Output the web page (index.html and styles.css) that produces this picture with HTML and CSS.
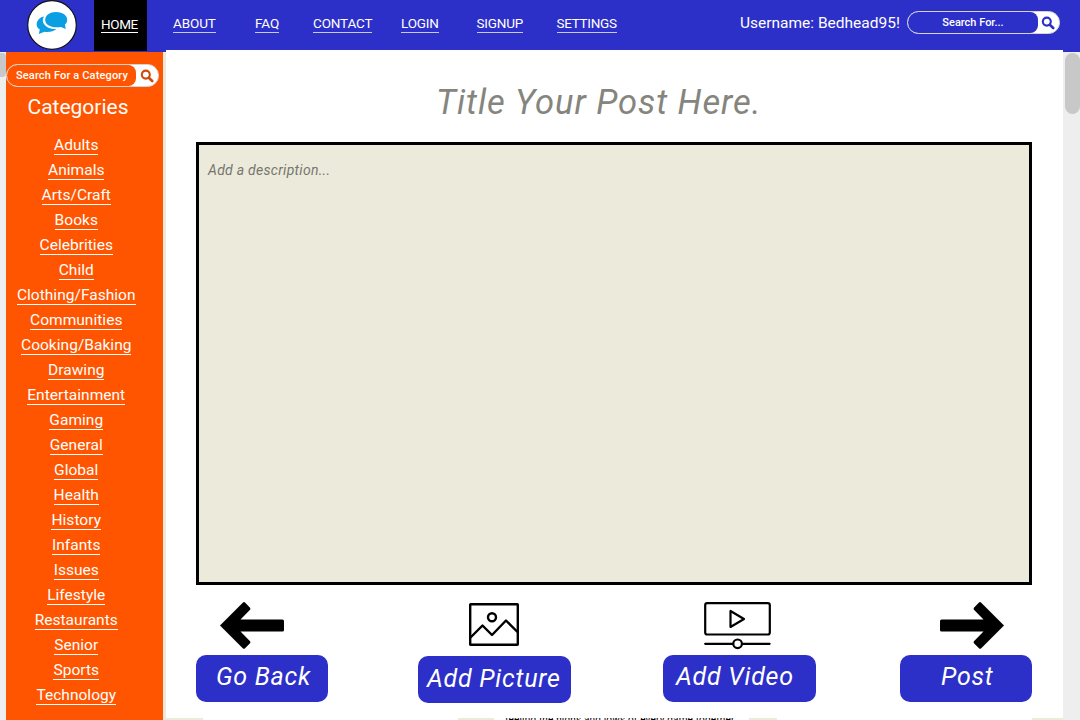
FILE: index.html
```html
<!DOCTYPE html>
<html lang="en">
<head>
<meta charset="utf-8">
<title>Create a post</title>
<link rel="stylesheet" href="styles.css">
</head>
<body>
<header class="topbar">
  <div class="logo">
    <svg width="50" height="50" viewBox="0 0 50 50">
      <circle cx="25" cy="25" r="24.3" fill="#fff" stroke="#111" stroke-width="1.2"/>
      <path d="M17 16.500C13 23 20 29.500 29.500 29C26.500 31.500 22 32.500 17.500 31.800L11.800 34L12.800 29.600C9.400 27.500 9 24 10.500 21C12 18.500 14 17 17 16.500Z" fill="#0a9fe2"/>
      <path d="M29 12C35 12 40.200 15 40.200 19.500C40.200 22 39.300 23.500 37.900 24.600L38.800 29L33.900 26.900C25 28.600 18.200 25 18.200 20C18.200 15 23 12 29 12Z" fill="#0a9fe2" stroke="#fff" stroke-width="2.800" paint-order="stroke"/>
    </svg>
  </div>
  <nav class="nav">
    <a class="nav-link active" href="#"><span>HOME</span></a>
    <a class="nav-link about" href="#"><span>ABOUT</span></a>
    <a class="nav-link faq" href="#"><span>FAQ</span></a>
    <a class="nav-link contact" href="#"><span>CONTACT</span></a>
    <a class="nav-link login" href="#"><span>LOGIN</span></a>
    <a class="nav-link signup" href="#"><span>SIGNUP</span></a>
    <a class="nav-link settings" href="#"><span>SETTINGS</span></a>
  </nav>
  <div class="username">Username: Bedhead95!</div>
  <div class="search search-top">
    <span class="field">Search For...</span>
    <svg class="lens" width="14" height="14" viewBox="0 0 14 14"><circle cx="5.800" cy="5.600" r="4" fill="none" stroke="currentColor" stroke-width="2.100"/><path d="M8.800 8.800L12.200 12" stroke="currentColor" stroke-width="2.600" stroke-linecap="round"/></svg>
  </div>
</header>
<div class="body">
  <div class="gutter"><div class="thumb"></div></div>
  <aside class="sidebar">
    <div class="search search-side">
      <span class="field">Search For a Category</span>
      <svg class="lens" width="14" height="14" viewBox="0 0 14 14"><circle cx="5.800" cy="5.600" r="4" fill="none" stroke="currentColor" stroke-width="2.100"/><path d="M8.800 8.800L12.200 12" stroke="currentColor" stroke-width="2.600" stroke-linecap="round"/></svg>
    </div>
    <h2 class="side-title"><span>Categories</span></h2>
    <ul class="cats">
      <li><a href="#">Adults</a></li>
      <li><a href="#">Animals</a></li>
      <li><a href="#">Arts/Craft</a></li>
      <li><a href="#">Books</a></li>
      <li><a href="#">Celebrities</a></li>
      <li><a href="#">Child</a></li>
      <li><a href="#">Clothing/Fashion</a></li>
      <li><a href="#">Communities</a></li>
      <li><a href="#">Cooking/Baking</a></li>
      <li><a href="#">Drawing</a></li>
      <li><a href="#">Entertainment</a></li>
      <li><a href="#">Gaming</a></li>
      <li><a href="#">General</a></li>
      <li><a href="#">Global</a></li>
      <li><a href="#">Health</a></li>
      <li><a href="#">History</a></li>
      <li><a href="#">Infants</a></li>
      <li><a href="#">Issues</a></li>
      <li><a href="#">Lifestyle</a></li>
      <li><a href="#">Restaurants</a></li>
      <li><a href="#">Senior</a></li>
      <li><a href="#">Sports</a></li>
      <li><a href="#">Technology</a></li>
    </ul>
  </aside>
  <main class="main">
    <section class="composer">
      <h1 class="post-title">Title Your Post Here.</h1>
      <div class="description">Add a description...</div>
      <div class="actions">
        <div class="action back">
          <svg width="64" height="48" viewBox="0 0 64 48"><path d="M0 23.500L23 0.500Q24 -.5 25 .5L30.300 6V7.500L20.500 17.500H62.500Q64 17.500 64 19V28Q64 29.500 62.500 29.500H20.500L30.300 39.500V41L25 46.300Q24 47.300 23 46.500Z"/></svg>
          <button class="btn"><span>Go Back</span></button>
        </div>
        <div class="action picture">
          <svg width="50" height="44" viewBox="0 0 50 44" fill="none" stroke="#000" stroke-width="2.400"><rect x="1.200" y="1.200" width="47.600" height="40.500" rx=".5"/><circle cx="23" cy="14.300" r="4"/><path d="M1.500 34.500L13.500 22.500L23 32L37 17.500L48.500 29" stroke-linejoin="round"/></svg>
          <button class="btn"><span>Add Picture</span></button>
        </div>
        <div class="action video">
          <svg width="67" height="48" viewBox="0 0 67 48" fill="none" stroke="#000" stroke-width="2.200" stroke-linejoin="round" stroke-linecap="round"><rect x="1.200" y="1.200" width="64.600" height="31.300" rx="2"/><path d="M26.500 9V25L40 17ZM1.200 41.800H29M38.200 41.800H65.600"/><circle cx="33.600" cy="41.800" r="4.300"/></svg>
          <button class="btn"><span>Add Video</span></button>
        </div>
        <div class="action post">
          <svg width="64" height="48" viewBox="0 0 64 48"><path transform="matrix(-1 0 0 1 64 0)" d="M0 23.500L23 0.500Q24 -.5 25 .5L30.300 6V7.500L20.500 17.500H62.500Q64 17.500 64 19V28Q64 29.500 62.500 29.500H20.500L30.300 39.500V41L25 46.300Q24 47.300 23 46.500Z"/></svg>
          <button class="btn"><span>Post</span></button>
        </div>
      </div>
    </section>
    <div class="feed">
      <div class="card card-a"></div>
      <div class="card card-b"><p>feeling the highs and lows of every game together</p></div>
      <div class="card card-c"></div>
    </div>
  </main>
  <div class="scrollbar"><div class="thumb"></div></div>
</div>
</body>
</html>
```
FILE: styles.css
```css
* { box-sizing: border-box; }
body {
  margin: 0;
  width: 1080px;
  height: 720px;
  overflow: hidden;
  font-family: Roboto, "Liberation Sans", sans-serif;
  color: #fff;
}
a { color: inherit; text-decoration: none; }
svg { display: block; }

.topbar {
  display: flex;
  align-items: flex-start;
  height: 52px;
  background: #2d2fc9;
}
.logo { width: 94px; padding-left: 27px; }
.nav { display: flex; width: 646px; }
.nav-link {
  display: flex;
  height: 51px;
  padding-top: 15px;
  font-size: 13.500px;
  line-height: 17px;
}
.nav-link span { height: 18px; border-bottom: 1px solid #c9c9f0; white-space: nowrap; }
.nav-link.active { width: 53px; padding: 16px 2px 0 0; justify-content: center; background: #000; letter-spacing: -.4px; }
.nav-link.active span { height: 17px; border-color: #fff; }
.about { width: 82px; margin-left: 26px; }
.faq { width: 58px; }
.contact { width: 88px; letter-spacing: -.3px; }
.about, .faq { letter-spacing: -.1px; }
.contact { letter-spacing: -.15px; }
.login { width: 75.500px; letter-spacing: -.2px; }
.signup { width: 80px; letter-spacing: -.2px; }
.settings { letter-spacing: -.3px; }
.username { width: 167px; padding-top: 13px; font-size: 15.500px; line-height: 20px; white-space: nowrap; letter-spacing: 0; }

.search {
  display: flex;
  height: 23px;
  border: 1px solid #d4d4d4;
  border-radius: 12px;
  background: #fff;
}
.search .field {
  height: 21px;
  border-radius: 11px 8px 8px 11px;
  font-size: 11px;
  line-height: 22px;
  text-align: center;
  white-space: nowrap;
  font-weight: 500;
}
.lens { margin: 4px 0 0 4px; }
.search-top { width: 153px; margin-top: 11px; color: #2d2fc9; }
.search-top .field { width: 130px; background: #2d2fc9; color: #fff; }
.search-top .lens { margin-left: 3px; }
.search-side { width: 153px; color: #cc4a0c; }
.search-side .field { width: 129px; padding-left: 1px; letter-spacing: .15px; background: #ff5500; color: #fff; }

.body { display: flex; height: 668px; }
.gutter { width: 6px; background: #eee; padding-top: 1px; }
.gutter .thumb { height: 24px; background: #c8c8c8; border-radius: 0 4px 4px 0; }
.sidebar { width: 157px; padding-top: 12px; background: #ff5500; }
.side-title { margin: 6px 0 0; padding-right: 13px; font-size: 21px; font-weight: 400; line-height: 28px; text-align: center; }
.cats { margin: 13px 0 0; padding: 0 16.500px 0 0; list-style: none; }
.cats li { display: flex; justify-content: center; height: 25px; font-size: 15.500px; line-height: 22px; white-space: nowrap; letter-spacing: .03px; }
.cats a { height: 21px; border-bottom: 1px solid #fff; }

.main { width: 900px; padding-left: 3px; background: #eceadb; }
.composer { position: relative; height: 668px; margin-top: -2px; background: #fff; overflow: hidden; }
.post-title { margin: 30px 0 0 270px; color: #85857e; font-size: 34.500px; font-style: italic; font-weight: 400; line-height: 44px; letter-spacing: .95px; white-space: nowrap; }
.description {
  width: 836px;
  height: 443px;
  margin: 18px 0 0 30px;
  padding: 15px 9px;
  border: 3px solid #000;
  background: #eceadb;
  color: #76766f;
  font-size: 14px;
  font-style: italic;
  line-height: 20px;
  letter-spacing: .28px;
}
.actions { display: flex; margin-top: 17px; padding-left: 30px; }
.action { display: flex; flex-direction: column; }
.action > svg { height: 48px; }
.btn {
  height: 47px;
  margin-top: 5px;
  padding: 0;
  border: 0;
  border-radius: 10px;
  background: #2d2fc9;
  color: #fff;
  font: italic 400 25px/28px Roboto, "Liberation Sans", sans-serif;
  letter-spacing: .75px;
  text-align: left;
  white-space: nowrap;
}
.btn span { display: block; padding-bottom: 4px; }
.back { width: 132px; margin-right: 90px; }
.back svg { margin-left: 24px; }
.back .btn { padding-left: 20px; }
.picture { width: 153px; margin-right: 92px; }
.picture svg { height: 44px; margin: 1px 0 3px 51px; }
.picture .btn { margin-top: 6px; padding-left: 9px; }
.picture .btn span { padding-bottom: 2px; }
.video { width: 153px; margin-right: 84px; }
.video svg { margin-left: 41px; }
.video .btn { padding-left: 13px; }
.post { width: 132px; }
.post svg { margin-left: 40px; }
.post .btn { padding-left: 41px; }

.feed { display: flex; height: 2px; padding-left: 37px; }
.card { height: 2px; background: #fff; }
.card-a { width: 255px; margin-right: 36px; }
.card-b { width: 255px; margin-right: 28px; padding-left: 11px; }
.card-b p { margin: -4px 0 0; color: #000; font-size: 10px; line-height: 12px; letter-spacing: .18px; white-space: nowrap; }
.card-c { width: 255px; }

.scrollbar { width: 17px; padding: 1px 0 0 2px; background: #eee; }
.scrollbar .thumb { height: 61px; border-radius: 8px; background: #c8c8c8; }
```
